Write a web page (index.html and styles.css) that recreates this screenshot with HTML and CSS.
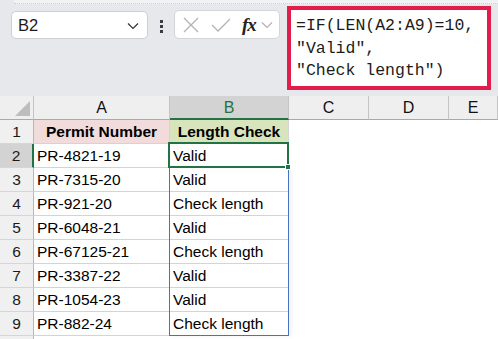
FILE: index.html
```html
<!DOCTYPE html>
<html>
	<head>
		<meta charset="UTF-8">
		<title>LEN check</title>
		<link rel="stylesheet" href="styles.css">
	</head>
	<body>
	<div class="topbar">
		<div class="namebox">
			<span>B2</span>
			<svg width="12" height="8" viewBox="0 0 12 8"><path d="M1 1.5 L6 6.5 L11 1.5" fill="none" stroke="#333" stroke-width="1.2"/></svg>
		</div>
		<div class="dots"><i></i><i></i><i></i></div>
		<div class="fxbox">
			<svg class="ico_x" width="16" height="16" viewBox="0 0 16 16"><path d="M1 1 L15 15 M15 1 L1 15" stroke="#b3b3b3" stroke-width="1.3" fill="none"/></svg>
			<svg class="ico_ok" width="20" height="14" viewBox="0 0 20 14"><path d="M1 7 L7 13 L19 1" stroke="#b3b3b3" stroke-width="1.3" fill="none"/></svg>
			<span class="fx">fx</span>
			<svg width="12" height="8" viewBox="0 0 12 8"><path d="M1 1.5 L6 6.5 L11 1.5" fill="none" stroke="#b3b3b3" stroke-width="1.2"/></svg>
		</div>
		<div class="formula">
			<div>=IF(LEN(A2:A9)=10,</div>
			<div>"Valid",</div>
			<div>"Check length")</div>
		</div>
	</div>

	<div class="sheet">
		<div class="corner"><i></i></div>
		<div class="ch">A</div>
		<div class="ch cur">B</div>
		<div class="ch">C</div>
		<div class="ch">D</div>
		<div class="ch">E</div>

		<div class="rh">1</div>
		<div class="c bold pink">Permit Number</div>
		<div class="c bold green">Length Check</div>
		<div class="e"></div><div class="e"></div><div class="e"></div>

		<div class="rh cur">2</div>
		<div class="c">PR-4821-19</div>
		<div class="c">Valid</div>
		<div class="e"></div><div class="e"></div><div class="e"></div>

		<div class="rh">3</div>
		<div class="c">PR-7315-20</div>
		<div class="c">Valid</div>
		<div class="e"></div><div class="e"></div><div class="e"></div>

		<div class="rh">4</div>
		<div class="c">PR-921-20</div>
		<div class="c">Check length</div>
		<div class="e"></div><div class="e"></div><div class="e"></div>

		<div class="rh">5</div>
		<div class="c">PR-6048-21</div>
		<div class="c">Valid</div>
		<div class="e"></div><div class="e"></div><div class="e"></div>

		<div class="rh">6</div>
		<div class="c">PR-67125-21</div>
		<div class="c">Check length</div>
		<div class="e"></div><div class="e"></div><div class="e"></div>

		<div class="rh">7</div>
		<div class="c">PR-3387-22</div>
		<div class="c">Valid</div>
		<div class="e"></div><div class="e"></div><div class="e"></div>

		<div class="rh">8</div>
		<div class="c">PR-1054-23</div>
		<div class="c">Valid</div>
		<div class="e"></div><div class="e"></div><div class="e"></div>

		<div class="rh">9</div>
		<div class="c">PR-882-24</div>
		<div class="c">Check length</div>
		<div class="e"></div><div class="e"></div><div class="e"></div>

		<div class="rh"></div>
		<div class="e"></div><div class="e"></div><div class="e"></div><div class="e"></div><div class="e"></div>

		<div class="range"></div>
		<div class="active"><b></b></div>
	</div>
	</body>
</html>
```

FILE: styles.css
```css
*{
	padding: 0px;
	margin: 0px;
	box-sizing: border-box;
}
html{
	overflow: hidden;
}
body{
	width: 498px;
	height: 339px;
	overflow: hidden;
	background: #fff;
	font-family: "Liberation Sans", Arial, sans-serif;
	color: #000;
}
/* 顶部编辑栏 */
.topbar{
	position: relative;
	height: 96px;
	background: #e6e8eb;
	display: flex;
	align-items: flex-start;
	padding: 6px 0 0 11px;
}
.topbar:before{
	content: "";
	position: absolute;
	left: 14px;
	right: 0;
	top: 0;
	height: 3px;
	background: #f1f2f3;
	border-bottom: 1px dotted #cfd1d4;
}
.namebox{
	margin-top: 5px;
	width: 137px;
	height: 28px;
	background: #fff;
	border: 1px solid #cdcfd2;
	border-radius: 5px;
	display: flex;
	align-items: center;
	justify-content: space-between;
	padding: 0 8px 0 6px;
	font-size: 16.5px;
	color: #1b1b1b;
}
.namebox svg{
	margin-top: 2px;
}
.dots{
	margin: 14px 0 0 12px;
	display: flex;
	flex-direction: column;
	gap: 2px;
}
.dots i{
	display: block;
	width: 3px;
	height: 3px;
	background: #3c3c3c;
}
.fxbox{
	margin: 4px 0 0 11px;
	width: 106px;
	height: 29px;
	background: #fff;
	border: 1px solid #d3d5d8;
	border-radius: 5px;
	display: flex;
	align-items: center;
	padding-left: 8px;
}
.ico_x{
	margin-right: 12px;
}
.ico_ok{
	margin-right: 11px;
}
.fx{
	font-family: "Liberation Serif", "Times New Roman", serif;
	font-style: italic;
	font-weight: bold;
	font-size: 19px;
	color: #222;
	margin-right: 5px;
	letter-spacing: -1px;
}
.formula{
	margin-left: 7px;
	width: 204px;
	height: 84px;
	background: #fff;
	border: 4px solid #e21d4c;
	padding: 5px 0 0 5px;
	font-family: "Liberation Mono", "Courier New", monospace;
	font-size: 16.5px;
	line-height: 22.5px;
	color: #1c1c1c;
}
/* 表格区域 */
.sheet{
	position: relative;
	height: 243px;
	overflow: hidden;
	display: grid;
	grid-template-columns: 34px 136px 119px 80px 80px 1fr;
	grid-auto-rows: 24px;
	font-size: 15.5px;
}
.corner{
	background: #efefef;
	border-right: 1px solid #c4c4c4;
	border-bottom: 1px solid #a9a9a9;
	position: relative;
}
.corner i{
	position: absolute;
	right: 3px;
	bottom: 3px;
	width: 0;
	height: 0;
	border-left: 15px solid transparent;
	border-bottom: 15px solid #bdbdbd;
}
.ch{
	background: #efefef;
	border-right: 1px solid #c4c4c4;
	border-bottom: 1px solid #a9a9a9;
	text-align: center;
	line-height: 23px;
	font-size: 16px;
	color: #111;
}
.ch.cur{
	background: #d3d3d3;
	color: #217346;
	border-bottom: 2px solid #217346;
}
.rh{
	background: #f0f0f0;
	border-right: 1px solid #b8b8b8;
	border-bottom: 1px solid #d6d6d6;
	text-align: center;
	line-height: 24px;
	font-size: 15.5px;
	color: #1a1a1a;
}
.rh.cur{
	background: #d3d3d3;
	border-right: 2px solid #217346;
}
.c{
	border-right: 1px solid #d4d4d4;
	border-bottom: 1px solid #d4d4d4;
	padding-left: 3px;
	line-height: 24px;
	white-space: nowrap;
}
.bold{
	font-weight: bold;
	text-align: center;
	padding-left: 0;
}
.pink{
	background: #f2dcdb;
}
.green{
	background: #d8e4bc;
}
.e{
	background: #fff;
}
.range{
	position: absolute;
	left: 169px;
	top: 71px;
	width: 120px;
	height: 169px;
	border: 1px solid #4472c4;
	box-shadow: 3px 0 4px rgba(0,0,0,0.05);
}
.active{
	position: absolute;
	left: 168px;
	top: 46px;
	width: 121px;
	height: 26px;
	border: 2px solid #217346;
}
.active b{
	position: absolute;
	right: -4px;
	bottom: -4px;
	width: 6px;
	height: 6px;
	background: #217346;
	border: 1px solid #fff;
}
```
